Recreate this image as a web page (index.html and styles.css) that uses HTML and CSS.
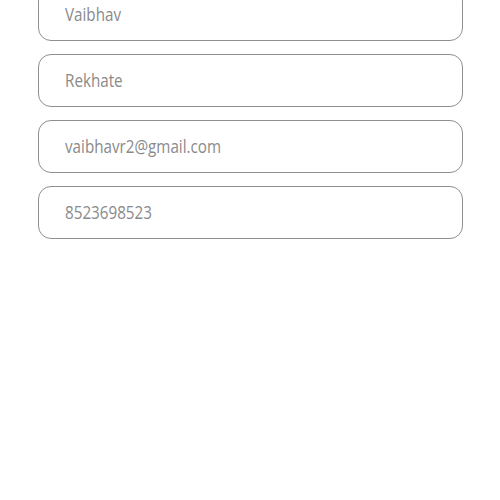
FILE: index.html
```html
<!DOCTYPE html>
<html>
<head>
<meta charset="utf-8">
<link rel="stylesheet" href="styles.css">
</head>
<body>
<form class="form">
  <div class="field"><span class="value">Vaibhav</span></div>
  <div class="field"><span class="value">Rekhate</span></div>
  <div class="field"><span class="value">vaibhavr2@gmail.com</span></div>
  <div class="field"><span class="value">8523698523</span></div>
</form>
</body>
</html>
```
FILE: styles.css
```css
html, body {
  margin: 0;
  padding: 0;
  background: #fff;
}
.form {
  width: 425px;
  margin: -12px auto 0;
  display: flex;
  flex-direction: column;
  gap: 13px;
}
.field {
  box-sizing: border-box;
  height: 53px;
  width: 100%;
  border: 1px solid #8f8f8f;
  border-radius: 13px;
  padding: 0 0 1px 26px;
  display: flex;
  align-items: center;
  background: #fff;
}
.value {
  display: inline-block;
  font-family: "Open Sans", sans-serif;
  font-size: 19px;
  color: #8a8a8a;
  transform: scaleX(0.8);
  transform-origin: left center;
  white-space: nowrap;
}
```
